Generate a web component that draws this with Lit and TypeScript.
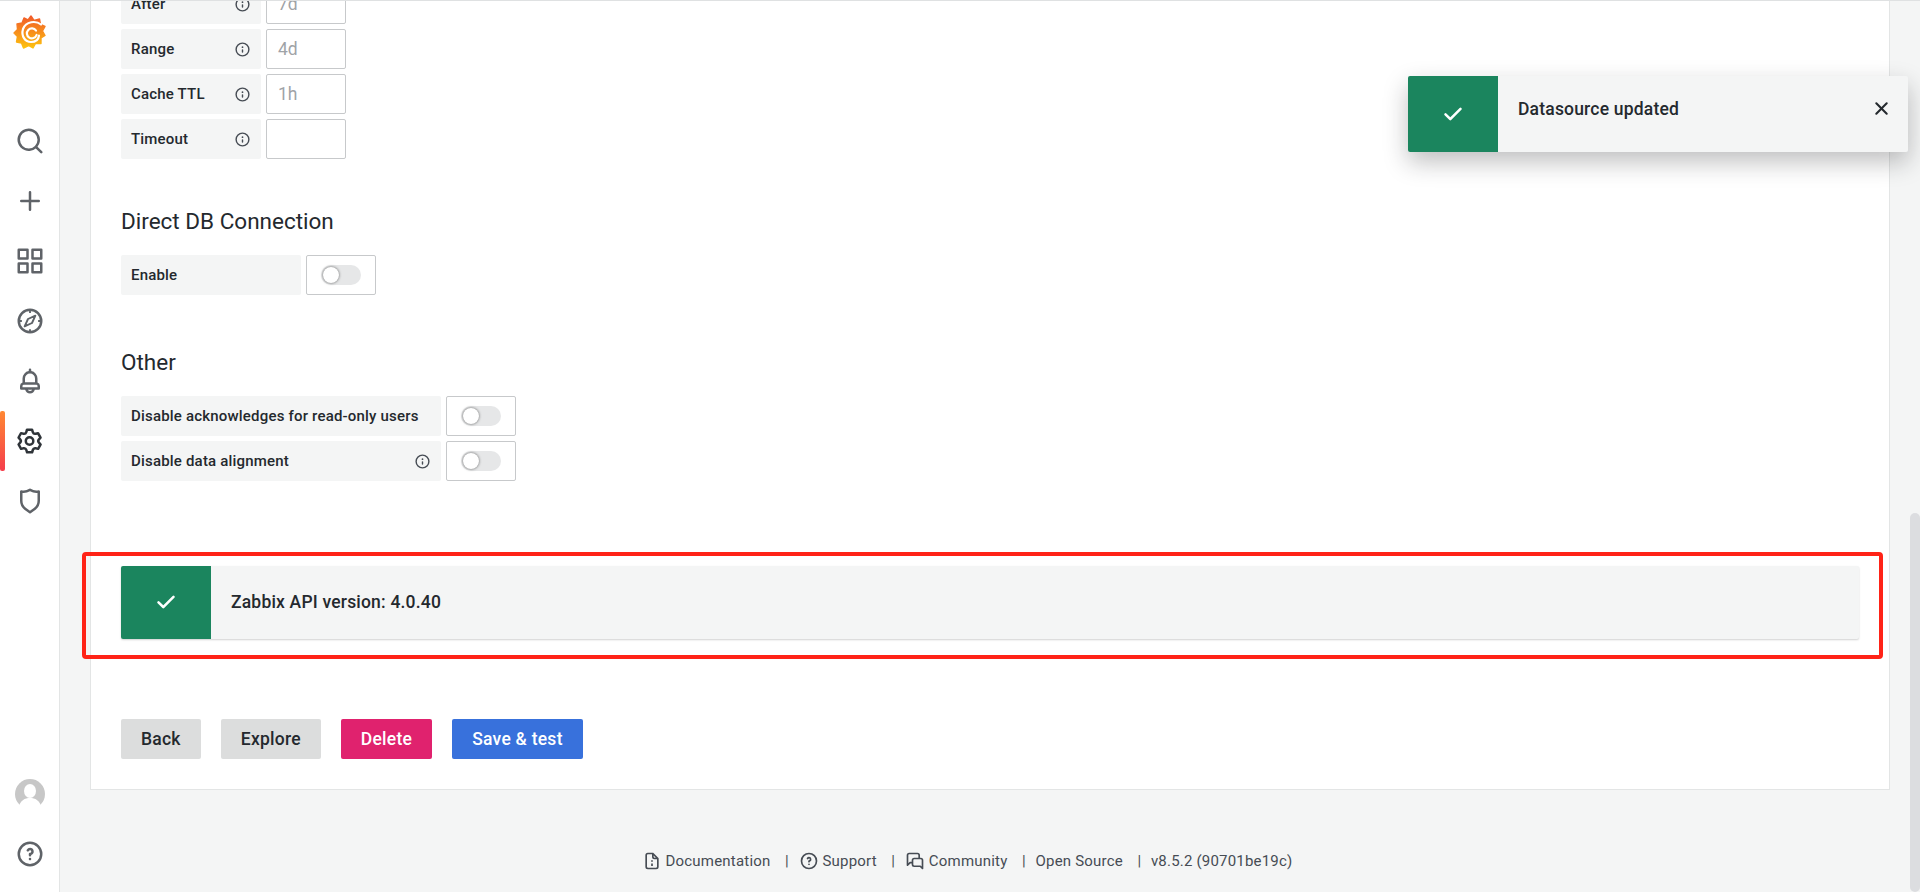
import { LitElement, html, css } from "lit";
import { customElement } from "lit/decorators.js";

const P: Record<string, string> = {
  search: "M21.71,20.29,18,16.61A9,9,0,1,0,16.61,18l3.68,3.68a1,1,0,0,0,1.42,0A1,1,0,0,0,21.71,20.29ZM11,18a7,7,0,1,1,7-7A7,7,0,0,1,11,18Z",
  plus: "M19,11H13V5a1,1,0,0,0-2,0v6H5a1,1,0,0,0,0,2h6v6a1,1,0,0,0,2,0V13h6a1,1,0,0,0,0-2Z",
  apps: "M10,13H3a1,1,0,0,0-1,1v7a1,1,0,0,0,1,1h7a1,1,0,0,0,1-1V14A1,1,0,0,0,10,13ZM9,20H4V15H9ZM21,2H14a1,1,0,0,0-1,1v7a1,1,0,0,0,1,1h7a1,1,0,0,0,1-1V3A1,1,0,0,0,21,2ZM20,9H15V4h5Zm1,4H14a1,1,0,0,0-1,1v7a1,1,0,0,0,1,1h7a1,1,0,0,0,1-1V14A1,1,0,0,0,21,13Zm-1,7H15V15h5ZM10,2H3A1,1,0,0,0,2,3v7a1,1,0,0,0,1,1h7a1,1,0,0,0,1-1V3A1,1,0,0,0,10,2ZM9,9H4V4H9Z",
  bell: "M18,13.18V10a6,6,0,0,0-5-5.91V3a1,1,0,0,0-2,0V4.09A6,6,0,0,0,6,10v3.18A3,3,0,0,0,4,16v2a1,1,0,0,0,1,1H8.14a4,4,0,0,0,7.72,0H19a1,1,0,0,0,1-1V16A3,3,0,0,0,18,13.18ZM8,10a4,4,0,0,1,8,0v3H8Zm4,10a2,2,0,0,1-1.72-1h3.44A2,2,0,0,1,12,20Zm6-3H6V16a1,1,0,0,1,1-1H17a1,1,0,0,1,1,1Z",
  cog: "M19.9,12.66a1,1,0,0,1,0-1.32L21.18,9.9a1,1,0,0,0,.12-1.17l-2-3.46a1,1,0,0,0-1.07-.48l-1.88.38a1,1,0,0,1-1.15-.66l-.61-1.83A1,1,0,0,0,13.64,2h-4a1,1,0,0,0-1,.68L8.08,4.51a1,1,0,0,1-1.15.66L5,4.79A1,1,0,0,0,4,5.27L2,8.73A1,1,0,0,0,2.1,9.9l1.27,1.44a1,1,0,0,1,0,1.32L2.1,14.1A1,1,0,0,0,2,15.27l2,3.46a1,1,0,0,0,1.07.48l1.88-.38a1,1,0,0,1,1.15.66l.61,1.83a1,1,0,0,0,1,.68h4a1,1,0,0,0,.95-.68l.61-1.83a1,1,0,0,1,1.15-.66l1.88.38a1,1,0,0,0,1.07-.48l2-3.46a1,1,0,0,0-.12-1.17ZM18.41,14l.8.9-1.28,2.22-1.18-.24a3,3,0,0,0-3.45,2L12.92,20H10.36L10,18.86a3,3,0,0,0-3.45-2l-1.18.24L4.07,14.89l.8-.9a3,3,0,0,0,0-4l-.8-.9L5.35,6.89l1.18.24a3,3,0,0,0,3.45-2L10.36,4h2.56l.38,1.14a3,3,0,0,0,3.45,2l1.18-.24,1.28,2.22-.8.9A3,3,0,0,0,18.41,14ZM11.64,8a4,4,0,1,0,4,4A4,4,0,0,0,11.64,8Zm0,6a2,2,0,1,1,2-2A2,2,0,0,1,11.64,14Z",
  shield: "M19.63,3.65a1,1,0,0,0-.84-.2,8,8,0,0,1-6.22-1.27,1,1,0,0,0-1.14,0A8,8,0,0,1,5.21,3.45a1,1,0,0,0-.84.2A1,1,0,0,0,4,4.43v7.45a9,9,0,0,0,3.77,7.33l3.65,2.6a1,1,0,0,0,1.16,0l3.65-2.6A9,9,0,0,0,20,11.88V4.43A1,1,0,0,0,19.63,3.65ZM18,11.88a7,7,0,0,1-2.93,5.7L12,19.77l-3.07-2.19A7,7,0,0,1,6,11.88V5.58a10,10,0,0,0,6-1.39,10,10,0,0,0,6,1.39Z",
  help: "M11.29,15.29a1.58,1.58,0,0,0-.12.15.76.76,0,0,0-.09.18.64.64,0,0,0-.06.18,1.36,1.36,0,0,0,0,.2.84.84,0,0,0,.08.38.9.9,0,0,0,.54.54.94.94,0,0,0,.76,0,.9.9,0,0,0,.54-.54A1,1,0,0,0,13,16a1,1,0,0,0-.29-.71A1,1,0,0,0,11.29,15.29ZM12,2A10,10,0,1,0,22,12,10,10,0,0,0,12,2Zm0,18a8,8,0,1,1,8-8A8,8,0,0,1,12,20ZM12,7A3,3,0,0,0,9.4,8.5a1,1,0,1,0,1.73,1A1,1,0,0,1,12,9a1,1,0,0,1,0,2,1,1,0,0,0-1,1v1a1,1,0,0,0,2,0v-.18A3,3,0,0,0,12,7Z",
  info: "M12,2A10,10,0,1,0,22,12,10,10,0,0,0,12,2Zm0,18a8,8,0,1,1,8-8A8,8,0,0,1,12,20Zm0-8.5a1,1,0,0,0-1,1v3a1,1,0,0,0,2,0v-3A1,1,0,0,0,12,11.5Zm0-4a1.25,1.25,0,1,0,1.25,1.25A1.25,1.25,0,0,0,12,7.5Z",
  check: "M18.71,7.21a1,1,0,0,0-1.42,0L9.84,14.67,6.71,11.53A1,1,0,1,0,5.29,13l3.84,3.84a1,1,0,0,0,1.42,0l8.16-8.16A1,1,0,0,0,18.71,7.21Z",
  times: "M13.41,12l4.3-4.29a1,1,0,1,0-1.42-1.42L12,10.59,7.71,6.29A1,1,0,0,0,6.29,7.71L10.59,12l-4.3,4.29a1,1,0,0,0,0,1.42,1,1,0,0,0,1.42,0L12,13.41l4.29,4.3a1,1,0,0,0,1.42,0,1,1,0,0,0,0-1.42Z",
  doc: "M20,8.94a1.31,1.31,0,0,0-.06-.27V8.58a1.07,1.07,0,0,0-.19-.28h0l-6-6h0a1.07,1.07,0,0,0-.28-.19h-.09A.88.88,0,0,0,13.05,2H7A3,3,0,0,0,4,5V19a3,3,0,0,0,3,3H17a3,3,0,0,0,3-3V9S20,9,20,8.94ZM14,5.41,16.59,8H15a1,1,0,0,1-1-1ZM18,19a1,1,0,0,1-1,1H7a1,1,0,0,1-1-1V5A1,1,0,0,1,7,4h5V7a3,3,0,0,0,3,3h3ZM11,11h2v2H11Zm0,4h2v3H11Z",
  comments: "M19,8H18V5a3,3,0,0,0-3-3H5A3,3,0,0,0,2,5V17a1,1,0,0,0,.62.92A.84.84,0,0,0,3,18a1,1,0,0,0,.71-.29l2.81-2.82H8v1.44a3,3,0,0,0,3,3h6.92l2.37,2.38A1,1,0,0,0,21,22a.84.84,0,0,0,.38-.08A1,1,0,0,0,22,21V11A3,3,0,0,0,19,8ZM8,11v1.89H6.11a1,1,0,0,0-.71.29L4,14.59V5A1,1,0,0,1,5,4H15a1,1,0,0,1,1,1V8H11A3,3,0,0,0,8,11Zm12,7.59-1-1a1,1,0,0,0-.71-.3H11a1,1,0,0,1-1-1V11a1,1,0,0,1,1-1h8a1,1,0,0,1,1,1Z",
};

const icon = (name: string, cls = "") =>
  html`<svg class="icon ${cls}" viewBox="0 0 24 24" aria-hidden="true"><path fill="currentColor" d=${P[name]}></path></svg>`;

const compass = html`<svg class="icon" viewBox="0 0 24 24" aria-hidden="true">
  <circle cx="12" cy="12" r="9" fill="none" stroke="currentColor" stroke-width="2"></circle>
  <path fill="none" stroke="currentColor" stroke-width="1.5" stroke-linejoin="round" d="M16.3 7.7 L13.6 13.6 L7.7 16.3 L10.4 10.4 Z"></path>
  <path fill="none" stroke="currentColor" stroke-width="1.5" d="M12 3.5V5.5M12 18.5V20.5M3.5 12H5.5M18.5 12H20.5"></path>
</svg>`;

const logo = html`<svg class="logo" viewBox="0 0 33 34" aria-hidden="true">
  <defs>
    <linearGradient id="lg" x1="0" y1="0" x2="0" y2="1">
      <stop offset="0" stop-color="#f15a29"></stop>
      <stop offset="1" stop-color="#fdc20f"></stop>
    </linearGradient>
  </defs>
  <path fill="url(#lg)" stroke="url(#lg)" stroke-width="1.4" stroke-linejoin="round" d="M18 1 L21 5.5 L26.5 4 L27.5 9.5 L32 11.5 L29.5 16 L32 20.5 L28 23 L28 28.5 L22.5 28.5 L20 33 L15.5 30.5 L10.5 33 L8.5 28 L3.5 27 L4.5 21.5 L1 18 L4.5 14.5 L4 9 L9 8 L11 3 L15 5 Z"></path>
  <path fill="none" stroke="#fff" stroke-width="2.2" stroke-linecap="round" d="M28 9.5 C23 5.5 13 6 10 14 C8 21 12 27 18 27 C22.5 27 25.5 24.5 26 20.5"></path>
  <path fill="none" stroke="#fff" stroke-width="2.2" stroke-linecap="round" d="M23 15.5 A5 5 0 1 0 23.6 20"></path>
</svg>`;

const avatar = html`<svg class="avatar" viewBox="0 0 30 30" aria-hidden="true">
  <circle cx="15" cy="15" r="15" fill="#c7c7c7"></circle>
  <ellipse cx="15" cy="12" rx="6" ry="7" fill="#fff"></ellipse>
  <path fill="#fff" d="M3 30 C5 21 10 19 15 19 C20 19 25 21 27 30 Z"></path>
</svg>`;

@customElement("app-root")
export class AppRoot extends LitElement {
  static styles = css`
    :host {
      display: block;
      font-family: Roboto, "Liberation Sans", sans-serif;
      color: #24292e;
    }
    * { box-sizing: border-box; }
    .shell {
      position: relative;
      display: grid;
      grid-template-columns: 60px 1fr;
      width: 1920px;
      height: 892px;
      overflow: hidden;
      background: #f4f5f5;
      border-top: 1px solid #dfe1e2;
    }
    .icon { display: block; width: 16px; height: 16px; flex: none; }
    .side {
      position: relative;
      display: flex;
      flex-direction: column;
      align-items: center;
      background: #fff;
      border-right: 1px solid #e3e5e5;
      padding-bottom: 8px;
    }
    .brand { height: 110px; padding-top: 14px; }
    .logo { display: block; width: 33px; height: 34px; }
    .item {
      position: relative;
      display: flex;
      align-items: center;
      justify-content: center;
      width: 100%;
      height: 60px;
      color: #5f6368;
    }
    .item .icon { width: 30px; height: 30px; }
    .item.active { color: #2f3439; }
    .item.active::before {
      content: "";
      position: absolute;
      left: 0;
      top: 0;
      width: 5px;
      height: 60px;
      border-radius: 2px;
      background: linear-gradient(#ff8833, #f53e4c);
    }
    .spacer { flex: 1; }
    .avatar { display: block; width: 30px; height: 30px; }
    .main {
      display: flex;
      flex-direction: column;
      height: 891px;
      padding: 0 30px;
      overflow: hidden;
    }
    .panel {
      flex: none;
      margin-top: -17px;
      background: #fff;
      border: 1px solid #e3e5e5;
      border-top: 0;
      padding: 0 30px 30px 30px;
      height: 806px;
    }
    .rows { display: flex; flex-direction: column; gap: 5px; }
    .row { display: flex; gap: 5px; height: 40px; }
    .label {
      display: flex;
      align-items: center;
      justify-content: space-between;
      height: 40px;
      padding: 0 10.5px 0 10px;
      background: #f4f5f5;
      border-radius: 2px;
      font-size: 15px;
      letter-spacing: 0.19px;
      font-weight: 500;
      white-space: nowrap;
    }
    .label .icon { width: 17px; height: 17px; color: #464c54; }
    .w140 { width: 140px; }
    .w180 { width: 180px; }
    .w320 { width: 320px; }
    .input {
      display: flex;
      align-items: center;
      width: 80px;
      height: 40px;
      padding-left: 11px;
      background: #fff;
      border: 1px solid #c7c9cb;
      border-radius: 2px;
      font-size: 17.5px;
      color: #9fa3a7;
    }
    .switchbox {
      display: flex;
      align-items: center;
      justify-content: center;
      width: 70px;
      height: 40px;
      border: 1px solid #c7c9cb;
      border-radius: 2px;
      background: #fff;
    }
    .track {
      display: flex;
      align-items: center;
      width: 40px;
      height: 20px;
      padding-left: 2px;
      border-radius: 10px;
      background: #e6e7e8;
    }
    .knob {
      width: 16px;
      height: 16px;
      border-radius: 50%;
      background: #fff;
      box-shadow: 0 0 3px rgba(0, 0, 0, 0.6);
    }
    h3 {
      margin: 49px 0 21px;
      font-size: 22.5px;
      line-height: 26px;
      font-weight: 400;
    }
    h3.second { margin-top: 54px; margin-bottom: 21px; }
    .alert {
      display: flex;
      height: 73px;
      margin-top: 85px;
      background: #f4f5f5;
      border-radius: 2px;
      box-shadow: 0 1px 2px rgba(24, 26, 27, 0.2);
      font-size: 17.5px;
      letter-spacing: 0.19px;
      font-weight: 500;
      overflow: hidden;
    }
    .alert-icon {
      display: flex;
      align-items: center;
      justify-content: center;
      flex: none;
      width: 90px;
      background: #1b855e;
      color: #fff;
    }
    .alert-icon .icon { width: 30px; height: 30px; }
    .alert > .alert-body, .alert > .alert-icon { padding-bottom: 2px; }
    .alert-body { display: flex; align-items: center; flex: 1; padding-left: 20px; }
    .actions { display: flex; gap: 20px; margin-top: 80px; }
    .btn {
      display: flex;
      align-items: center;
      height: 40px;
      padding: 0 20px;
      border-radius: 2px;
      font-size: 17.5px;
      letter-spacing: 0.25px;
      font-weight: 500;
    }
    .sec { background: #dcdddd; color: #24292e; }
    .del { background: #e0226e; color: #fff; }
    .pri { background: #3871dc; color: #fff; }
    .footer {
      display: flex;
      align-items: center;
      justify-content: center;
      flex: none;
      height: 20px;
      margin-top: 61px;
      padding-right: 46px;
      font-size: 15px;
      letter-spacing: 0.2px;
      color: #464c54;
      white-space: nowrap;
    }
    .footer .icon { width: 20px; height: 20px; margin-right: 4px; }
    .fitem { display: flex; align-items: center; }
    .sep { width: 28px; padding-left: 14.5px; color: #464c54; }
    .toast {
      position: absolute;
      top: 75px;
      right: 12px;
      display: flex;
      width: 500px;
      height: 76px;
      background: #f4f5f5;
      border-radius: 2px;
      box-shadow: 0 10px 24px rgba(24, 26, 27, 0.28);
      font-size: 17.5px;
      letter-spacing: 0.19px;
      font-weight: 500;
      overflow: hidden;
    }
    .toast .alert-body { align-items: flex-start; padding-top: 23px; line-height: 20px; }
    .close { display: flex; align-items: center; padding: 0 14.5px 12px 0; color: #24292e; }
    .close .icon { width: 25px; height: 25px; }
    .mark {
      position: absolute;
      left: 82px;
      top: 551px;
      width: 1801px;
      height: 107px;
      border: 4px solid #ff2317;
      border-radius: 4px;
    }
    .scroll {
      position: absolute;
      right: 0;
      top: 512px;
      width: 10px;
      height: 379px;
      border-radius: 5px;
      background: #dcdde0;
    }
  `;

  private row(label: string, value: string) {
    return html`<div class="row">
      <div class="label w140"><span>${label}</span>${icon("info")}</div>
      <div class="input">${value}</div>
    </div>`;
  }

  private toggle(label: string, width: string, info: boolean) {
    return html`<div class="row">
      <div class="label ${width}"><span>${label}</span>${info ? icon("info") : ""}</div>
      <div class="switchbox"><div class="track"><div class="knob"></div></div></div>
    </div>`;
  }

  render() {
    return html`<div class="shell">
      <nav class="side">
        <div class="brand">${logo}</div>
        <div class="item">${icon("search")}</div>
        <div class="item">${icon("plus")}</div>
        <div class="item">${icon("apps")}</div>
        <div class="item">${compass}</div>
        <div class="item">${icon("bell")}</div>
        <div class="item active">${icon("cog")}</div>
        <div class="item">${icon("shield")}</div>
        <div class="spacer"></div>
        <div class="item">${avatar}</div>
        <div class="item">${icon("help")}</div>
      </nav>
      <main class="main">
        <section class="panel">
          <div class="rows">
            ${this.row("After", "7d")}
            ${this.row("Range", "4d")}
            ${this.row("Cache TTL", "1h")}
            ${this.row("Timeout", "")}
          </div>
          <h3>Direct DB Connection</h3>
          <div class="rows">${this.toggle("Enable", "w180", false)}</div>
          <h3 class="second">Other</h3>
          <div class="rows">
            ${this.toggle("Disable acknowledges for read-only users", "w320", false)}
            ${this.toggle("Disable data alignment", "w320", true)}
          </div>
          <div class="alert">
            <div class="alert-icon">${icon("check")}</div>
            <div class="alert-body">Zabbix API version: 4.0.40</div>
          </div>
          <div class="actions">
            <div class="btn sec">Back</div>
            <div class="btn sec">Explore</div>
            <div class="btn del">Delete</div>
            <div class="btn pri">Save &amp; test</div>
          </div>
        </section>
        <footer class="footer">
          <span class="fitem">${icon("doc")}Documentation</span>
          <span class="sep">|</span>
          <span class="fitem">${icon("help")}Support</span>
          <span class="sep">|</span>
          <span class="fitem">${icon("comments")}Community</span>
          <span class="sep">|</span>
          <span class="fitem">Open Source</span>
          <span class="sep">|</span>
          <span class="fitem">v8.5.2 (90701be19c)</span>
        </footer>
      </main>
      <div class="mark"></div>
      <div class="toast">
        <div class="alert-icon">${icon("check")}</div>
        <div class="alert-body">Datasource updated</div>
        <div class="close">${icon("times")}</div>
      </div>
      <div class="scroll"></div>
    </div>`;
  }
}
